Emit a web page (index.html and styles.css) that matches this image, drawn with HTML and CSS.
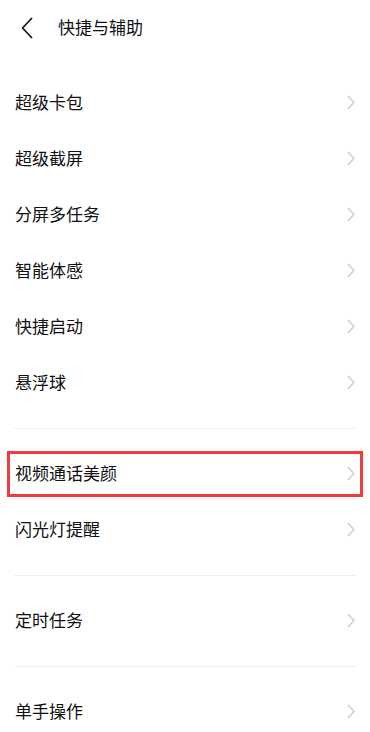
FILE: index.html
```html
<!DOCTYPE html>
<html lang="zh-CN">
<head>
<meta charset="utf-8">
<meta name="viewport" content="width=device-width, initial-scale=1">
<title>快捷与辅助</title>
<link rel="stylesheet" href="styles.css">
</head>
<body>
<header class="topbar">
  <svg class="back" width="14" height="22" viewBox="0 0 14 22" aria-hidden="true">
    <polyline points="11.5,1.5 2.5,11 11.5,20.5" fill="none" stroke="#1a1a1a" stroke-width="1.8" stroke-linecap="round" stroke-linejoin="round"/>
  </svg>
  <h1 class="title">快捷与辅助</h1>
</header>
<main class="list">
  <section class="group first">
    <div class="row"><span class="label">超级卡包</span><svg class="chev" width="8" height="15" viewBox="0 0 8 15"><polyline points="1,1 7,7.5 1,14" fill="none" stroke="#c9c9c9" stroke-width="1.3"/></svg></div>
    <div class="row"><span class="label">超级截屏</span><svg class="chev" width="8" height="15" viewBox="0 0 8 15"><polyline points="1,1 7,7.5 1,14" fill="none" stroke="#c9c9c9" stroke-width="1.3"/></svg></div>
    <div class="row"><span class="label">分屏多任务</span><svg class="chev" width="8" height="15" viewBox="0 0 8 15"><polyline points="1,1 7,7.5 1,14" fill="none" stroke="#c9c9c9" stroke-width="1.3"/></svg></div>
    <div class="row"><span class="label">智能体感</span><svg class="chev" width="8" height="15" viewBox="0 0 8 15"><polyline points="1,1 7,7.5 1,14" fill="none" stroke="#c9c9c9" stroke-width="1.3"/></svg></div>
    <div class="row"><span class="label">快捷启动</span><svg class="chev" width="8" height="15" viewBox="0 0 8 15"><polyline points="1,1 7,7.5 1,14" fill="none" stroke="#c9c9c9" stroke-width="1.3"/></svg></div>
    <div class="row"><span class="label">悬浮球</span><svg class="chev" width="8" height="15" viewBox="0 0 8 15"><polyline points="1,1 7,7.5 1,14" fill="none" stroke="#c9c9c9" stroke-width="1.3"/></svg></div>
  </section>
  <hr class="divider">
  <section class="group">
    <div class="row highlight"><span class="label">视频通话美颜</span><svg class="chev" width="8" height="15" viewBox="0 0 8 15"><polyline points="1,1 7,7.5 1,14" fill="none" stroke="#c9c9c9" stroke-width="1.3"/></svg></div>
    <div class="row"><span class="label">闪光灯提醒</span><svg class="chev" width="8" height="15" viewBox="0 0 8 15"><polyline points="1,1 7,7.5 1,14" fill="none" stroke="#c9c9c9" stroke-width="1.3"/></svg></div>
  </section>
  <hr class="divider">
  <section class="group">
    <div class="row"><span class="label">定时任务</span><svg class="chev" width="8" height="15" viewBox="0 0 8 15"><polyline points="1,1 7,7.5 1,14" fill="none" stroke="#c9c9c9" stroke-width="1.3"/></svg></div>
  </section>
  <hr class="divider">
  <section class="group">
    <div class="row"><span class="label">单手操作</span><svg class="chev" width="8" height="15" viewBox="0 0 8 15"><polyline points="1,1 7,7.5 1,14" fill="none" stroke="#c9c9c9" stroke-width="1.3"/></svg></div>
  </section>
</main>
</body>
</html>
```

FILE: styles.css
```css
* { box-sizing: border-box; }
html, body {
  margin: 0;
  padding: 0;
  background: #ffffff;
}
body {
  width: 370px;
  height: 732px;
  overflow: hidden;
  font-family: "Noto Sans CJK SC", "Noto Sans", sans-serif;
  color: #1a1a1a;
}
.topbar {
  height: 58px;
  display: flex;
  align-items: center;
  padding-left: 20px;
  padding-bottom: 2px;
}
.back {
  display: block;
  flex: none;
}
.title {
  margin: 0 0 3px 24px;
  font-size: 17px;
  font-weight: 400;
  line-height: 1;
  color: #111111;
}
.list {
  padding-top: 17px;
}
.group {
  display: flex;
  flex-direction: column;
}
.row {
  position: relative;
  height: 56px;
  display: flex;
  align-items: center;
  justify-content: space-between;
  padding: 0 15px 0 15px;
}
.label {
  font-size: 17px;
  line-height: 1;
  color: #111111;
  padding-bottom: 3px;
}
.chev {
  display: block;
  flex: none;
  margin-bottom: 2px;
}
.divider {
  margin: 17px 14px 17px 14px;
  height: 1px;
  border: 0;
  background: #efefef;
}
.highlight::after {
  content: "";
  position: absolute;
  top: 5px;
  bottom: 5px;
  left: 7px;
  right: 7px;
  border: 3px solid #f23b3b;
  pointer-events: none;
}
```
